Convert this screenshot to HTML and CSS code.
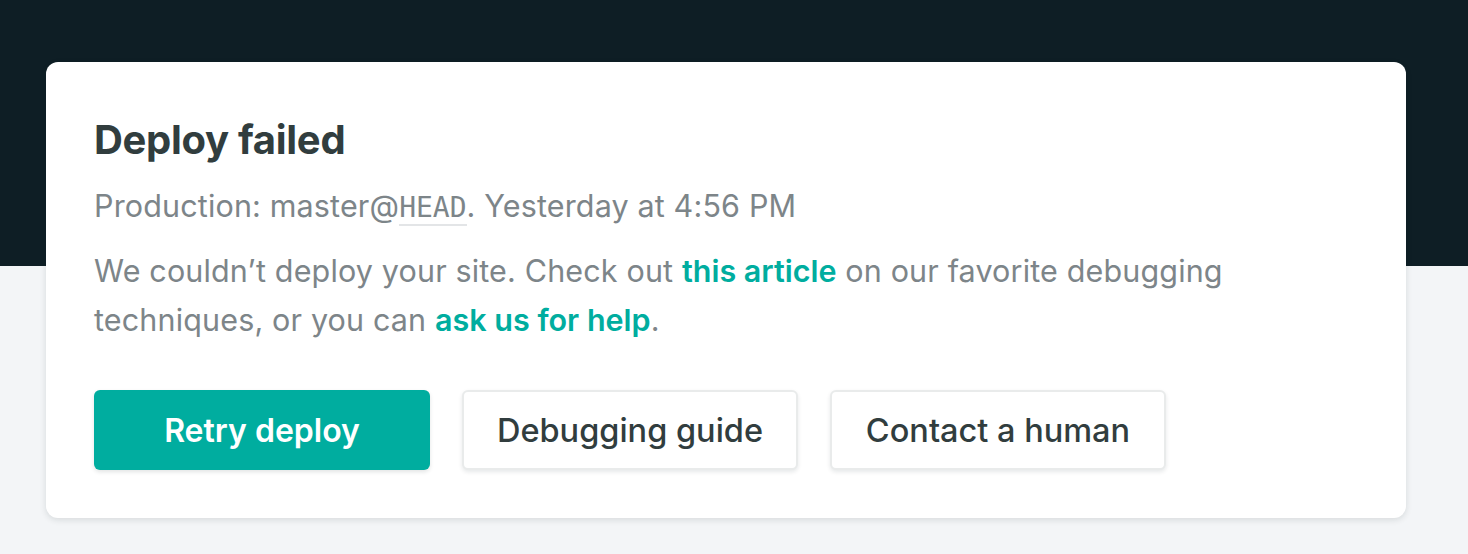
FILE: index.html
```html
<!DOCTYPE html>
<html lang="en">
<head>
<meta charset="utf-8">
<title>Deploy failed</title>
<link rel="stylesheet" href="styles.css">
</head>
<body>
<div class="page">
  <div class="hero"></div>
  <div class="content">
    <section class="card">
      <h1 class="title">Deploy failed</h1>
      <p class="meta">Production: master@<abbr class="ref">HEAD</abbr>. Yesterday at 4:56 PM</p>
      <p class="desc">We couldn’t deploy your site. Check out <a class="link" href="#">this article</a> on our favorite debugging techniques, or you can <a class="link" href="#">ask us for help</a>.</p>
      <div class="actions">
        <button class="btn btn-primary">Retry deploy</button>
        <button class="btn btn-secondary">Debugging guide</button>
        <button class="btn btn-secondary">Contact a human</button>
      </div>
    </section>
  </div>
</div>
</body>
</html>
```

FILE: styles.css
```css
* { box-sizing: border-box; }
html, body {
  margin: 0;
  padding: 0;
}
body {
  width: 1468px;
  height: 554px;
  overflow: hidden;
  background: #f3f5f7;
  font-family: Inter, "Noto Sans", "Liberation Sans", sans-serif;
}
.page {
  position: relative;
  height: 554px;
}
.hero {
  height: 266px;
  background: #0e1e25;
}
.content {
  margin-top: -204px;
  padding: 0 62px 0 46px;
}
.card {
  background: #fff;
  border-radius: 12px;
  box-shadow: 0 2px 6px rgba(14, 30, 37, 0.12);
  padding: 52px 48px 48px;
  height: 456px;
}
.title {
  margin: 0;
  font-size: 40px;
  line-height: 52px;
  font-weight: 700;
  color: #313d3e;
  letter-spacing: -0.3px;
}
.meta {
  margin: 20px 0 0;
  font-size: 30.5px;
  line-height: 40px;
  color: #7d8589;
  letter-spacing: 0.15px;
}
.ref {
  font-family: "DejaVu Sans Mono", "Liberation Mono", monospace;
  font-size: 28px;
  letter-spacing: 0;
  text-decoration: none;
  border-bottom: 2px solid #e3e5e7;
}
.desc {
  margin: 18px 0 0;
  font-size: 30.5px;
  line-height: 49px;
  color: #7d8589;
  letter-spacing: 0.15px;
  max-width: 1200px;
}
.link {
  color: #00ad9f;
  font-weight: 600;
  letter-spacing: 0;
  text-decoration: none;
}
.actions {
  display: flex;
  gap: 32px;
  margin-top: 46px;
}
.btn {
  height: 80px;
  width: 336px;
  border-radius: 6px;
  font-family: inherit;
  font-size: 32.5px;
  font-weight: 500;
  cursor: pointer;
}
.btn-primary {
  background: #00ad9f;
  color: #fff;
  font-weight: 600;
  font-size: 32px;
  border: none;
  box-shadow: 0 2px 4px rgba(14, 30, 37, 0.12);
}
.btn-secondary {
  background: #fff;
  color: #313d3e;
  border: 2px solid #e9ebeb;
  box-shadow: 0 2px 4px rgba(14, 30, 37, 0.10);
}
```
